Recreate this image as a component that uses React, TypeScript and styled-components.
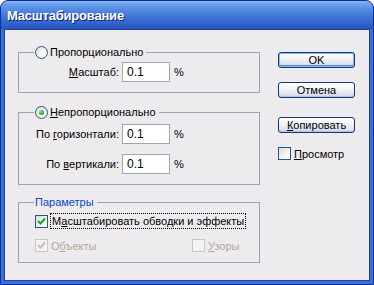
import React from 'react';
import styled, { createGlobalStyle } from 'styled-components';

const GlobalStyle = createGlobalStyle`
  html, body {
    margin: 0;
    padding: 0;
    background: #ffffff;
  }
  body {
    font-family: "Liberation Sans", Arial, sans-serif;
    font-size: 11px;
    color: #000;
  }
`;

const Window = styled.div`
  width: 374px;
  height: 285px;
  box-sizing: border-box;
  display: flex;
  flex-direction: column;
  background: #3a6fd8;
  border: 1px solid #0b2f9e;
  border-top-left-radius: 8px;
  border-top-right-radius: 8px;
  overflow: hidden;
`;

const TitleBar = styled.div`
  height: 28px;
  flex: none;
  display: flex;
  align-items: center;
  padding-left: 6px;
  background: linear-gradient(
    #8ab6f2 0%,
    #6a9fea 12%,
    #4f86df 35%,
    #3f73d6 60%,
    #3060c8 85%,
    #2a52b8 100%
  );
`;

const Title = styled.span`
  font-family: "Liberation Sans", Arial, sans-serif;
  font-weight: bold;
  font-size: 13px;
  color: #fff;
  text-shadow: 1px 1px 0 #10237a;
  letter-spacing: -0.2px;
`;

const Body = styled.div`
  flex: 1;
  margin: 0 3px 3px 3px;
  border: 1px solid #1d3fa6;
  background: #eeebee;
  display: flex;
  padding: 16px 0 0 13px;
`;

const LeftColumn = styled.div`
  width: 242px;
  display: flex;
  flex-direction: column;
`;

const Group = styled.fieldset<{ $gap: number; $pb: number }>`
  box-sizing: border-box;
  width: 242px;
  margin: 0 0 ${(p) => p.$gap}px 0;
  min-width: 0;
  padding: 0 0 ${(p) => p.$pb}px 0;
  border: 1px solid #a3a2a8;
`;

const Legend = styled.legend<{ $blue?: boolean }>`
  margin-left: 15px;
  padding: 0 3px 0 1px;
  display: flex;
  align-items: center;
  gap: 2px;
  height: 13px;
  line-height: 13px;
  color: ${(p) => (p.$blue ? '#0a46d0' : '#000')};
`;

const Radio = styled.span<{ $checked?: boolean }>`
  width: 13px;
  height: 13px;
  box-sizing: border-box;
  border-radius: 50%;
  border: 1px solid #1f5a8c;
  background: radial-gradient(circle at 65% 65%, #ffffff 0%, #f2f1ec 45%, #d8d6cc 100%);
  display: flex;
  align-items: center;
  justify-content: center;

  &::after {
    content: '';
    display: ${(p) => (p.$checked ? 'block' : 'none')};
    width: 5px;
    height: 5px;
    border-radius: 50%;
    background: radial-gradient(circle at 35% 35%, #7fe07f, #1ea21e 70%);
  }
`;

const FieldRow = styled.div<{ $top: number }>`
  display: grid;
  grid-template-columns: 100px 48px auto;
  column-gap: 3px;
  align-items: center;
  margin-top: ${(p) => p.$top}px;
`;

const FieldLabel = styled.span`
  justify-self: end;
  white-space: nowrap;
`;

const Input = styled.div`
  box-sizing: border-box;
  width: 48px;
  height: 20px;
  border: 1px solid #9ba7b5;
  background: #fff;
  padding: 0 0 0 4px;
  display: flex;
  align-items: center;
  font-size: 12px;
`;

const Unit = styled.span`
  margin-left: 1px;
`;

const U = styled.span`
  text-decoration: underline;
  text-underline-offset: 1px;
`;

const CheckRow = styled.div<{ $top: number }>`
  display: grid;
  grid-template-columns: 157px auto;
  align-items: center;
  margin-top: ${(p) => p.$top}px;
  padding-left: 16px;
`;

const CheckItem = styled.label<{ $disabled?: boolean }>`
  display: flex;
  align-items: center;
  gap: 3px;
  white-space: nowrap;
  color: ${(p) => (p.$disabled ? '#aca899' : '#000')};
`;

const Box = styled.span<{ $disabled?: boolean }>`
  width: 13px;
  height: 13px;
  box-sizing: border-box;
  flex: none;
  border: 1px solid ${(p) => (p.$disabled ? '#c9c7c0' : '#1f5a8c')};
  background: ${(p) =>
    p.$disabled
      ? '#f4f2f4'
      : 'linear-gradient(135deg, #dcdad2 0%, #f4f3ef 55%, #ffffff 100%)'};
  display: flex;
  align-items: center;
  justify-content: center;
`;

const Focus = styled.span`
  outline: 1px dotted #000;
  outline-offset: 0;
  padding: 1px 1px 1px 1px;
`;

const RightColumn = styled.div`
  margin-left: 18px;
  padding-top: 6px;
  display: flex;
  flex-direction: column;
`;

const Button = styled.button<{ $default?: boolean; $top: number }>`
  box-sizing: border-box;
  width: 77px;
  height: 16px;
  margin: ${(p) => p.$top}px 0 0 0;
  padding: 0;
  font-family: "Liberation Sans", Arial, sans-serif;
  font-size: 11px;
  line-height: 14px;
  color: #000;
  border: 1px solid #0e3c7a;
  border-radius: 3px;
  background: linear-gradient(#ffffff 0%, #f3f4f8 40%, #dfe3ee 80%, #c8cfe2 100%);
  box-shadow: ${(p) =>
    p.$default ? 'inset 0 0 0 1px #8fb2ef, inset 0 -1px 0 1px #5c84dc' : 'inset 0 -1px 0 #b9c2d9'};
`;

const Preview = styled(CheckItem)`
  margin-top: 14px;
`;

const Check = ({ disabled }: { disabled?: boolean }) => (
  <svg width="9" height="9" viewBox="0 0 9 9">
    <path
      d="M1 4 L3.5 6.5 L8 1.5"
      fill="none"
      stroke={disabled ? '#c2c0ba' : '#21a121'}
      strokeWidth="2"
    />
  </svg>
);

const App: React.FC = () => {
  return (
    <>
      <GlobalStyle />
      <Window>
        <TitleBar>
          <Title>Масштабирование</Title>
        </TitleBar>
        <Body>
          <LeftColumn>
            <Group $gap={13} $pb={10}>
              <Legend>
                <Radio />
                <span>Пропорционально</span>
              </Legend>
              <FieldRow $top={3}>
                <FieldLabel>
                  <U>М</U>асштаб:
                </FieldLabel>
                <Input>0.1</Input>
                <Unit>%</Unit>
              </FieldRow>
            </Group>

            <Group $gap={11} $pb={10}>
              <Legend>
                <Radio $checked />
                <span>
                  <U>Н</U>епропорционально
                </span>
              </Legend>
              <FieldRow $top={5}>
                <FieldLabel>
                  По <U>г</U>оризонтали:
                </FieldLabel>
                <Input>0.1</Input>
                <Unit>%</Unit>
              </FieldRow>
              <FieldRow $top={10}>
                <FieldLabel>
                  По <U>в</U>ертикали:
                </FieldLabel>
                <Input>0.1</Input>
                <Unit>%</Unit>
              </FieldRow>
            </Group>

            <Group $gap={0} $pb={10}>
              <Legend $blue>Параметры</Legend>
              <CheckRow $top={5}>
                <CheckItem>
                  <Box>
                    <Check />
                  </Box>
                  <Focus>
                    М<U>а</U>сштабировать обводки и эффекты
                  </Focus>
                </CheckItem>
              </CheckRow>
              <CheckRow $top={11}>
                <CheckItem $disabled>
                  <Box $disabled>
                    <Check disabled />
                  </Box>
                  <span>
                    О<U>б</U>ъекты
                  </span>
                </CheckItem>
                <CheckItem $disabled>
                  <Box $disabled />
                  <span>
                    <U>У</U>зоры
                  </span>
                </CheckItem>
              </CheckRow>
            </Group>
          </LeftColumn>

          <RightColumn>
            <Button $default $top={0}>
              OK
            </Button>
            <Button $top={14}>Отмена</Button>
            <Button $top={19}>
              <U>К</U>опировать
            </Button>
            <Preview>
              <Box />
              <span>
                <U>П</U>росмотр
              </span>
            </Preview>
          </RightColumn>
        </Body>
      </Window>
    </>
  );
};

export default App;
